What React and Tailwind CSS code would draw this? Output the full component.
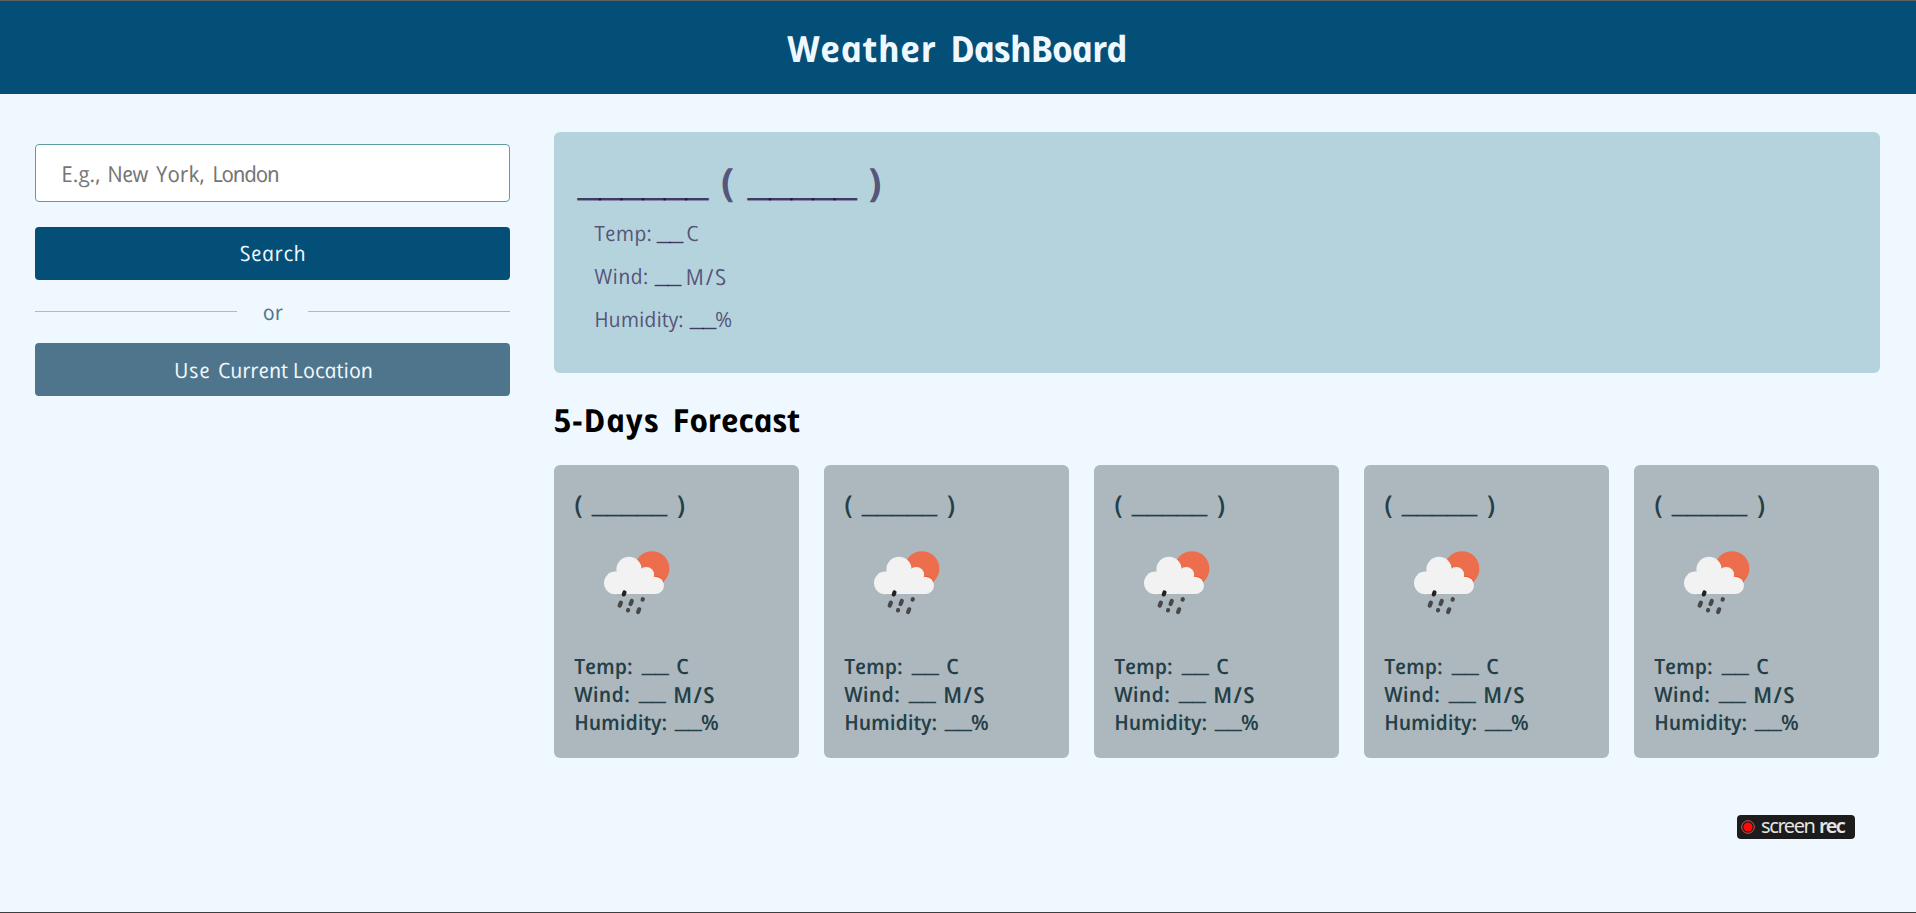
import React from "react";

/* Straightened cursive-style lettering: single-storey italic forms set upright. */
function Word({ className = "", children }) {
  return (
    <span
      className={`inline-block shrink-0 origin-[0_72%] skew-x-[12deg] whitespace-nowrap font-['Comic_Sans_MS','Open_Sans',sans-serif] italic ${className}`}
    >
      {children}
    </span>
  );
}

function Blank({ className = "", children }) {
  return (
    <span className={`inline-block shrink-0 whitespace-nowrap font-['Liberation_Sans',sans-serif] ${className}`}>
      {children}
    </span>
  );
}

function WeatherIcon() {
  return (
    <svg viewBox="0 0 100 100" className="ml-[15px] size-[100px]" aria-hidden="true">
      <circle cx="62" cy="38.6" r="17.4" fill="#ec6e4c" />
      <path d="M47 32 A13.4 13.4 0 0 1 52.4 38.3 A8.8 8.8 0 0 1 64.6 46 A9.4 9.4 0 0 1 74 51.5 L70 58 H50Z" fill="#ea5532" />
      <g fill="#f2f2f2">
        <circle cx="39" cy="39.3" r="12.6" />
        <circle cx="25.3" cy="52.9" r="11.3" />
        <circle cx="56.2" cy="45" r="8" />
        <circle cx="65.3" cy="55.4" r="8.7" />
        <path d="M25 42 H56 L66 56 V64.1 H25Z" />
      </g>
      <g stroke="#48484a" strokeWidth="4.2" strokeLinecap="round">
        <path d="M34.5 62.4 L33.8 64.4" stroke="#222" />
        <path d="M30.9 72.6 L29.7 75.6" />
        <path d="M41.8 71 L40.6 74" />
        <path d="M52.8 69.2 L52.6 69.6" />
        <path d="M38.1 80.1 L38 80.4" />
        <path d="M49.2 79.3 L48.1 82" />
      </g>
    </svg>
  );
}

function ForecastCard() {
  return (
    <li className="h-[293px] w-[245px] rounded-md bg-[#adb8be] pl-[21px] pt-[25px] font-semibold text-[#243f47]">
      <h3 className="flex h-[28px] text-[26px] leading-[28px]">
        <Word className="w-[17px]">(</Word>
        <Blank className="w-[86px] text-[27px] font-bold [-webkit-text-stroke:0.4px]">_____</Blank>
        <Word>)</Word>
      </h3>
      <div className="mt-[12px] h-[122px]">
        <WeatherIcon />
      </div>
      <div className="text-[21px] leading-[28px]">
        <p className="flex h-[28px]">
          <Word className="w-[67px]">Temp:</Word>
          <Blank className="-mt-[2px] w-[35px] text-[24px] font-bold [-webkit-text-stroke:0.4px]">__</Blank>
          <Word>C</Word>
        </p>
        <p className="flex h-[28px]">
          <Word className="w-[64px] tracking-[0.3px]">Wind:</Word>
          <Blank className="-mt-[2px] w-[35px] text-[24px] font-bold [-webkit-text-stroke:0.4px]">__</Blank>
          <Word className="text-[22px] tracking-[1.3px]">M/S</Word>
        </p>
        <p className="flex h-[28px]">
          <Word className="w-[100px]">Humidity:</Word>
          <Blank className="-mt-[2px] w-[27px] text-[24px] font-bold [-webkit-text-stroke:0.4px]">__</Blank>
          <Word>%</Word>
        </p>
      </div>
    </li>
  );
}

export default function App() {
  return (
    <div className="relative flex h-[913px] w-[1916px] flex-col overflow-hidden border-y border-t-[#5f6062] border-b-[#3c3e40] bg-[#f0f8ff]">
      <header className="flex h-[93px] shrink-0 items-center justify-center bg-[#034f77] pt-[2px] text-[#f0f8ff]">
        <h1 className="flex text-[36px] font-bold leading-[48px]">
          <Word className="w-[163px] tracking-[0.5px]">Weather</Word>
          <Word className="w-[175px] tracking-[-1.1px]">DashBoard</Word>
        </h1>
      </header>

      <main className="flex pl-[35px]">
        <section className="w-[475px] pt-[50px]">
          <div className="flex h-[58px] items-center rounded border border-[#5f9ea0] bg-white pl-[26px] text-[22px] leading-[30px] text-[#757575]">
            <Word className="w-[46px]">E.g.,</Word>
            <Word className="w-[49px] tracking-[-0.5px]">New</Word>
            <Word className="w-[56px]">York,</Word>
            <Word className="tracking-[-1.2px]">London</Word>
          </div>
          <button className="mt-[25px] flex h-[53px] w-full items-center justify-center rounded bg-[#034f77] pl-[4px] text-[21px] font-medium text-[#f0f8ff]">
            <Word className="tracking-[0.6px]">Search</Word>
          </button>
          <div className="flex h-[63px] items-center text-[21px] text-[#4e758b]">
            <span className="h-px flex-1 bg-[#b5b8c0]" />
            <span className="flex w-[71px] justify-center pl-[3px] pt-[2px]">
              <Word>or</Word>
            </span>
            <span className="h-px flex-1 bg-[#b5b8c0]" />
          </div>
          <button className="flex h-[53px] w-full items-center rounded bg-[#4e758b] pl-[138px] pt-[2px] text-[21px] font-medium text-[#f0f8ff]">
            <Word className="w-[41px] tracking-[0.9px]">Use</Word>
            <Word className="w-[80px] tracking-[-0.1px]">Current</Word>
            <Word className="tracking-[0.1px]">Location</Word>
          </button>
        </section>

        <section className="ml-[44px] w-[1326px] pt-[38px]">
          <div className="h-[241px] rounded-md bg-[#b5d3dc] pl-[24px] pt-[25px] text-[#1e0a42]/65">
            <h2 className="flex h-[48px] text-[39px] font-bold leading-[48px]">
              <Blank className="w-[144px] text-[40px] tracking-[-0.7px] [-webkit-text-stroke:1px]">______</Blank>
              <Word className="w-[26px]">(</Word>
              <Blank className="w-[122px] text-[40px] tracking-[-0.7px] [-webkit-text-stroke:1px]">_____</Blank>
              <Word>)</Word>
            </h2>
            <div className="pl-[18px] pt-[7px] text-[21px] leading-[43px]">
              <p className="flex h-[43px]">
                <Word className="w-[61px] tracking-[0.2px]">Temp:</Word>
                <Blank className="-mt-[2px] w-[31px] text-[24px] font-bold tracking-[-0.5px] [-webkit-text-stroke:0.4px]">__</Blank>
                <Word>C</Word>
              </p>
              <p className="flex h-[43px]">
                <Word className="w-[59px] tracking-[0.3px]">Wind:</Word>
                <Blank className="-mt-[2px] w-[32px] text-[24px] font-bold tracking-[-0.5px] [-webkit-text-stroke:0.4px]">__</Blank>
                <Word className="text-[22px] tracking-[1.7px]">M/S</Word>
              </p>
              <p className="flex h-[43px]">
                <Word className="w-[94px]">Humidity:</Word>
                <Blank className="-mt-[2px] w-[27px] text-[24px] font-bold tracking-[-0.5px] [-webkit-text-stroke:0.4px]">__</Blank>
                <Word>%</Word>
              </p>
            </div>
          </div>

          <h2 className="mt-[25px] flex h-[44px] pl-px text-[32px] font-bold leading-[44px] text-black">
            <Word className="w-[119px] tracking-[1px]">5-Days</Word>
            <Word className="tracking-[-0.3px]">Forecast</Word>
          </h2>
          <ul className="mt-[23px] flex gap-[25px]">
            <ForecastCard />
            <ForecastCard />
            <ForecastCard />
            <ForecastCard />
            <ForecastCard />
          </ul>
        </section>
      </main>

      <div className="absolute left-[1737px] top-[814px] flex h-[24px] w-[118px] items-center rounded bg-[#1c1c1c] pl-[4px]">
        <svg viewBox="0 0 14 14" className="size-[14px] shrink-0" aria-hidden="true">
          <circle cx="7" cy="7" r="6.3" fill="none" stroke="#e05050" strokeWidth="1" />
          <circle cx="7" cy="7" r="4.5" fill="#ff0a0a" />
        </svg>
        <span className="-mt-[3px] ml-[6px] flex font-['Noto_Sans',sans-serif] text-[20px] leading-[20px] text-[#e4e4e4]">
          <span className="w-[58px] tracking-[-1.4px]">screen</span>
          <span className="font-semibold tracking-[-1.6px]">rec</span>
        </span>
      </div>
    </div>
  );
}
